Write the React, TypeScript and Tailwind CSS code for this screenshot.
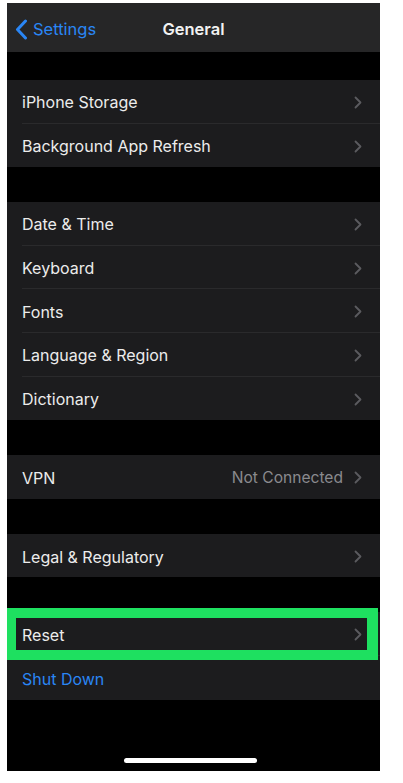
import React from 'react';

type Row = { label: string; value?: string; blue?: boolean; chevron?: boolean };

const sections: Row[][] = [
  [{ label: 'iPhone Storage' }, { label: 'Background App Refresh' }],
  [
    { label: 'Date & Time' },
    { label: 'Keyboard' },
    { label: 'Fonts' },
    { label: 'Language & Region' },
    { label: 'Dictionary' },
  ],
  [{ label: 'VPN', value: 'Not Connected' }],
  [{ label: 'Legal & Regulatory' }],
];

const Chevron = () => (
  <svg width="8" height="13" viewBox="0 0 8 13" className="shrink-0">
    <path d="M1.5 1.5 L6.5 6.5 L1.5 11.5" fill="none" stroke="#5b5b5f" strokeWidth="1.8" strokeLinecap="round" strokeLinejoin="round" />
  </svg>
);

const SettingRow = ({ row, last }: { row: Row; last: boolean }) => (
  <div className="flex h-[43.6px] items-stretch bg-[#1c1c1e] pl-[15px]">
    <div className={`flex flex-1 items-center pr-[18px] pt-[2px] ${last ? '' : 'border-b border-[#2a2a2c]'}`}>
      <span className={`flex-1 text-[16px] ${row.blue ? 'text-[#2a86f5]' : 'text-[#ececec]'}`}>{row.label}</span>
      {row.value && <span className="mr-[11px] text-[15.6px] text-[#8a8a8e]">{row.value}</span>}
      {row.chevron !== false && <Chevron />}
    </div>
  </div>
);

export default function App() {
  return (
    <div className="min-h-screen bg-white pl-[7px] pr-[23px] pt-[3px]" style={{ fontFamily: 'Inter, "Noto Sans", sans-serif' }}>
      <div className="flex h-[768px] flex-col bg-black">
        {/* Nav bar */}
        <div className="relative flex h-[49px] shrink-0 items-center justify-center bg-[#262627] pt-[4px]">
          <div className="absolute bottom-0 left-[8px] top-[4px] flex items-center gap-[5px] text-[#2a86f5]">
            <svg width="13" height="21" viewBox="0 0 13 21">
              <path d="M10.5 2 L2.5 10.5 L10.5 19" fill="none" stroke="#2a86f5" strokeWidth="3" strokeLinecap="round" strokeLinejoin="round" />
            </svg>
            <span className="text-[16.5px]">Settings</span>
          </div>
          <span className="text-[16.5px] font-semibold text-[#f2f2f2]">General</span>
        </div>

        <div className="h-[28px] shrink-0" />
        {sections.map((rows, i) => (
          <React.Fragment key={i}>
            <div>
              {rows.map((r, j) => (
                <SettingRow key={r.label} row={r} last={j === rows.length - 1} />
              ))}
            </div>
            <div className="h-[35px] shrink-0" />
          </React.Fragment>
        ))}

        {/* Reset section with highlight */}
        <div className="relative">
          <SettingRow row={{ label: 'Reset' }} last={false} />
          <SettingRow row={{ label: 'Shut Down', blue: true, chevron: false }} last />
          <div className="pointer-events-none absolute left-0 right-[2px] top-[-4px] h-[52px] border-[#1ee060] border-y-[10px] border-l-[9px] border-r-[11px]" />
        </div>

        <div className="flex flex-1 items-end justify-center pb-[8px]">
          <div className="mr-[6px] h-[5px] w-[133px] rounded-full bg-white" />
        </div>
      </div>
    </div>
  );
}
